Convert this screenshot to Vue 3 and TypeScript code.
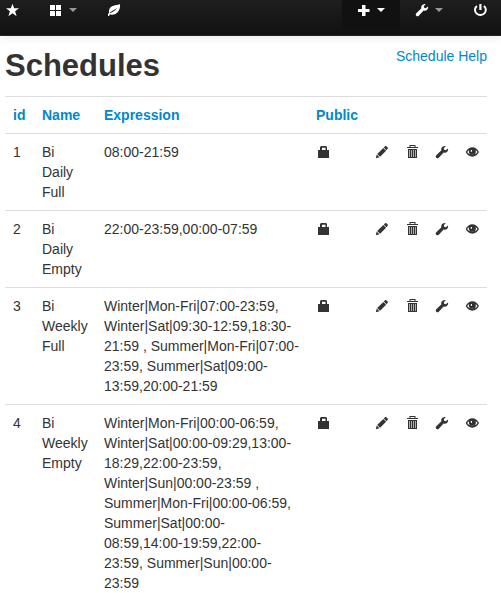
<script setup lang="ts">
import { defineComponent, h } from 'vue'

interface Schedule {
  id: number
  name: string
  expression: string
}

const icons: Record<string, string> = {
  star: 'M7.500 .7l1.700 4.600h4.800l-3.900 3 1.500 4.900-4.100-2.900-4.100 2.900 1.500-4.900L1 5.300h4.800z',
  grid: 'M1 2h5v5H1zM7 2h5v5H7zM1 8h5v5H1zM7 8h5v5H7z',
  leaf: 'M13 1C11 2.500 8 1.600 5 3.300 2.500 4.800 1.500 7 2.100 9.400L1 11.200V13h1l1-1.800c2 1 5 .7 7.200-1.400C12.700 7.400 13.400 4 13 1zM10.300 4.500C9 7 6.500 8.500 3.200 10.300L2.800 9.700C5.500 7.200 8.300 6.800 10.300 4.500z',
  plus: 'M5 2h3.500v4H12.500v3H8.500v4H5V9H1V6h4z',
  wrench: 'M13 3.500l-2.300 1.800-1.500-.5-.4-1.500L10.800 1C8.900.5 6.800 1.600 6.300 3.400c-.2.800-.1 1.300.1 1.900L1.300 10.200c-1.700 1.700.8 4.100 2.500 2.500L8.600 7.600c2.800.8 5.100-1.400 4.400-4.100z',
  lock: 'M2 5h2V2l1-1h5l1 1v3h2v8H2zM6 5h3.500V2.800H6z',
  pencil: 'M.8 13.200l.9-3.700 2.800 2.700zM2.200 9l6.100-6 2.800 2.800-6 6zM8.800 2.500l1.500-1.400c.7-.6 3.200 1.700 2.600 2.500l-1.400 1.700z',
  trash: 'M4.500 0h6v2H13v1H2V2h2.500zM5.500 1v1h4V1zM3 4h9v9H3zM4.200 5v7h.6V5zM6.200 5v7h.6V5zM8.200 5v7h.6V5zM10.200 5v7h.6V5z',
  eye: 'M.7 7C3.500.6 11.200.6 14 7c-2.900 6.200-10.400 6.200-13.300 0zM2.200 7c2.300 3.600 8 3.600 10.300 0-.5-.9-1.100-1.600-1.900-2.100 1 3.400-.8 4.700-3.200 4.700S3.100 8.300 4.100 4.900C3.300 5.400 2.700 6.100 2.200 7zM5.800 5v1.700h1.200V5z',
  power: 'M6.300 1h2.200v6H6.300zM3.500 2.300l1 1.700C1.600 6 3 11 7.400 11s5.800-5 2.900-7l1-1.700C16 5.500 13.500 13 7.400 13S-1.200 5.500 3.500 2.300z',
}

const Glyph = defineComponent({
  props: { name: { type: String, required: true } },
  setup: (props) => () =>
    h('svg', { viewBox: '0 0 14 14', width: 14, height: 14, fill: 'currentColor', 'aria-hidden': 'true' }, [
      h('path', { d: icons[props.name], 'fill-rule': 'evenodd' }),
    ]),
})

const actions = [
  { icon: 'pencil', label: 'Edit' },
  { icon: 'trash', label: 'Delete' },
  { icon: 'wrench', label: 'Configure' },
  { icon: 'eye', label: 'View' },
]

const schedules: Schedule[] = [
  { id: 1, name: 'Bi Daily Full', expression: '08:00-21:59' },
  { id: 2, name: 'Bi Daily Empty', expression: '22:00-23:59,00:00-07:59' },
  {
    id: 3,
    name: 'Bi Weekly Full',
    expression:
      'Winter|Mon-Fri|07:00-23:59, Winter|Sat|09:30-12:59,18:30-21:59 , Summer|Mon-Fri|07:00-23:59, Summer|Sat|09:00-13:59,20:00-21:59',
  },
  {
    id: 4,
    name: 'Bi Weekly Empty',
    expression:
      'Winter|Mon-Fri|00:00-06:59, Winter|Sat|00:00-09:29,13:00-18:29,22:00-23:59, Winter|Sun|00:00-23:59 , Summer|Mon-Fri|00:00-06:59, Summer|Sat|00:00-08:59,14:00-19:59,22:00-23:59, Summer|Sun|00:00-23:59',
  },
]
</script>

<template>
  <div class="page">
    <nav class="navbar" aria-label="Main">
      <div class="nav start">
        <a href="#" class="item" aria-label="Favourites"><Glyph name="star" /></a>
        <button type="button" class="item" aria-label="Dashboards"><Glyph name="grid" /><span class="caret" /></button>
        <a href="#" class="item" aria-label="Energy"><Glyph name="leaf" /></a>
      </div>
      <div class="nav end">
        <button type="button" class="item active" aria-label="Extras"><Glyph name="plus" /><span class="caret" /></button>
        <button type="button" class="item" aria-label="Setup"><Glyph name="wrench" /><span class="caret" /></button>
        <a href="#" class="item" aria-label="Log out"><Glyph name="power" /></a>
      </div>
    </nav>

    <main class="content">
      <header class="heading">
        <h1>Schedules</h1>
        <a href="#">Schedule Help</a>
      </header>
      <table class="table">
        <colgroup>
          <col class="col-id" />
          <col class="col-name" />
          <col />
          <col class="col-public" />
          <col v-for="a in actions" :key="a.icon" class="col-icon" />
        </colgroup>
        <thead>
          <tr>
            <th><a href="#">id</a></th>
            <th><a href="#">Name</a></th>
            <th><a href="#">Expression</a></th>
            <th><a href="#">Public</a></th>
            <th v-for="a in actions" :key="a.icon"></th>
          </tr>
        </thead>
        <tbody>
          <tr v-for="s in schedules" :key="s.id">
            <td>{{ s.id }}</td>
            <td>{{ s.name }}</td>
            <td>{{ s.expression }}</td>
            <td><button type="button" class="icon" aria-label="Private"><Glyph name="lock" /></button></td>
            <td v-for="a in actions" :key="a.icon">
              <button type="button" class="icon" :aria-label="a.label"><Glyph :name="a.icon" /></button>
            </td>
          </tr>
        </tbody>
      </table>
    </main>
  </div>
</template>

<style>
body {
  margin: 0;
  background: #fff;
}
</style>

<style scoped>
.page {
  color: #333;
  font-family: "Liberation Sans", Arial, sans-serif;
  font-size: 14px;
  line-height: 20px;
}
a {
  color: #08c;
  text-decoration: none;
}
button {
  border: 0;
  background: none;
  color: inherit;
  font: inherit;
  cursor: pointer;
}
.navbar {
  display: flex;
  justify-content: space-between;
  height: 35px;
  border-bottom: 1px solid #252525;
  background: linear-gradient(#1e1e1e, #111);
  box-shadow: 0 1px 10px rgba(0, 0, 0, 0.1);
}
.nav {
  display: flex;
  align-items: flex-start;
}
.item {
  display: flex;
  align-items: center;
  gap: 6px;
  box-sizing: border-box;
  height: 30px;
  padding: 0 15px 10px;
  color: #fff;
}
.start .item:first-child {
  padding-left: 5px;
}
.end .item:last-child {
  padding-right: 14px;
}
.item.active {
  background: #111;
}
.caret {
  border-top: 4px solid #999;
  border-right: 4px solid transparent;
  border-left: 4px solid transparent;
}
.active .caret {
  border-top-color: #fff;
}
.content {
  padding: 10px 14px 0 5px;
}
.heading {
  display: flex;
  align-items: flex-start;
  justify-content: space-between;
  padding-bottom: 10px;
}
h1 {
  margin: 0;
  font-size: 31px;
  line-height: 40px;
}
.table {
  width: 100%;
  border-collapse: separate;
  border-spacing: 0;
  table-layout: fixed;
}
.col-id {
  width: 29px;
}
.col-name {
  width: 62px;
}
.col-public {
  width: 59px;
}
.col-icon {
  width: 30px;
}
th,
td {
  padding: 8px;
  border-top: 1px solid #ddd;
  text-align: left;
  vertical-align: top;
}
.icon {
  display: flex;
  align-items: center;
  height: 20px;
  padding: 0;
}
</style>
